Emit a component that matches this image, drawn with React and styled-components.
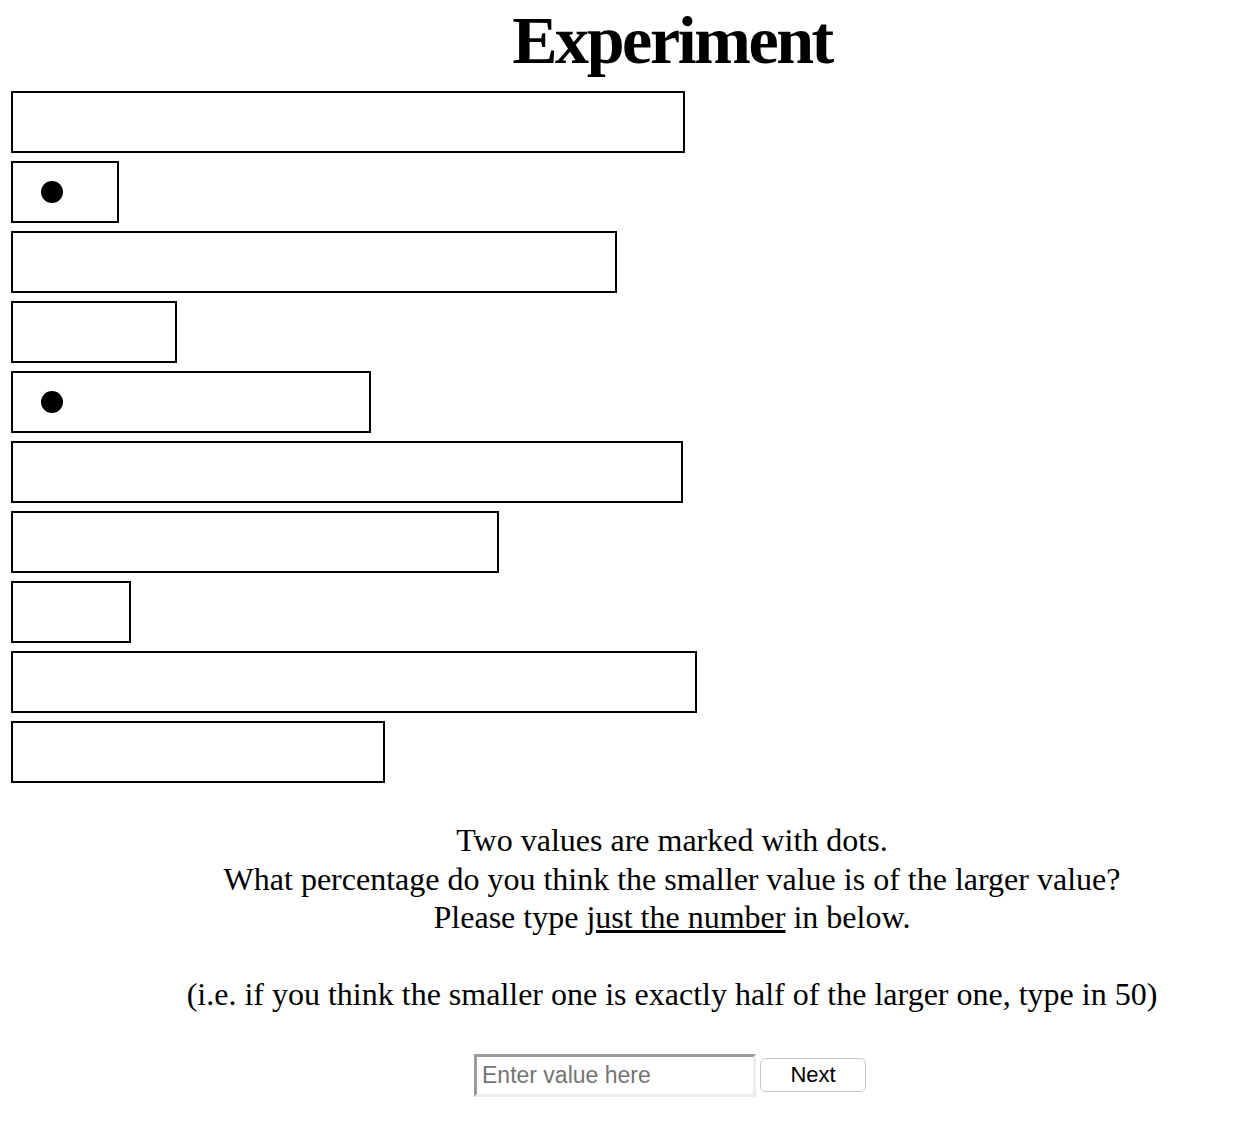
import React from 'react';
import styled, { createGlobalStyle } from 'styled-components';

const GlobalStyle = createGlobalStyle`
	html, body {
		margin: 0;
		padding: 0;
		background: #fff;
	}
	body {
		font-family: "Liberation Serif", "Times New Roman", serif;
		color: #000;
	}
`

const Page = styled.div`
	width: 1248px;
	display: flex;
	flex-direction: column;
`

const Title = styled.h1`
	margin: 0;
	padding-left: 96px;
	font-size: 68px;
	letter-spacing: -2.4px;
	line-height: 80px;
	font-weight: bold;
	text-align: center;
`

const Chart = styled.div`
	display: flex;
	flex-direction: column;
	gap: 8px;
	margin-top: 11px;
	padding-left: 11px;
`

const Bar = styled.div`
	box-sizing: border-box;
	height: 62px;
	width: ${props => props.width}px;
	border: 2px solid #000;
	display: flex;
	align-items: center;
	padding-left: 28px;
`

const Dot = styled.span`
	width: 22px;
	height: 22px;
	border-radius: 50%;
	background: #000;
`

const Question = styled.p`
	margin: 38px 0 0;
	padding-left: 96px;
	font-size: 32px;
	line-height: 38.5px;
	text-align: center;
`

const Underlined = styled.span`
	text-decoration: underline;
`

const Form = styled.div`
	display: flex;
	align-items: center;
	justify-content: center;
	gap: 4px;
	margin-top: 40px;
	padding-left: 92px;
`

const ValueInput = styled.input`
	box-sizing: border-box;
	width: 282px;
	height: 43px;
	border-style: solid;
	border-width: 3px;
	border-color: #9b9b9b #ececec #ececec #9b9b9b;
	padding: 0 5px;
	font-family: "Liberation Sans", Arial, sans-serif;
	font-size: 23px;
	outline: none;
	&::placeholder {
		color: #757575;
	}
`

const NextButton = styled.button`
	box-sizing: border-box;
	width: 106px;
	height: 34px;
	background: #fff;
	border: 1px solid #c6c6c6;
	border-radius: 6px;
	font-family: "Liberation Sans", Arial, sans-serif;
	font-size: 22px;
	color: #000;
	padding: 0;
`

const bars = [
	{ width: 674 },
	{ width: 108, marked: true },
	{ width: 606 },
	{ width: 166 },
	{ width: 360, marked: true },
	{ width: 672 },
	{ width: 488 },
	{ width: 120 },
	{ width: 686 },
	{ width: 374 },
]

export default function App() {
	return (
		<Page>
			<GlobalStyle />
			<Title>Experiment</Title>
			<Chart>
				{bars.map((bar, i) => (
					<Bar key={i} width={bar.width}>
						{bar.marked && <Dot />}
					</Bar>
				))}
			</Chart>
			<Question>
				Two values are marked with dots.<br />
				What percentage do you think the smaller value is of the larger value?<br />
				Please type <Underlined>just the number</Underlined> in below.<br />
				<br />
				(i.e. if you think the smaller one is exactly half of the larger one, type in 50)
			</Question>
			<Form>
				<ValueInput type="text" placeholder="Enter value here" />
				<NextButton>Next</NextButton>
			</Form>
		</Page>
	);
}
